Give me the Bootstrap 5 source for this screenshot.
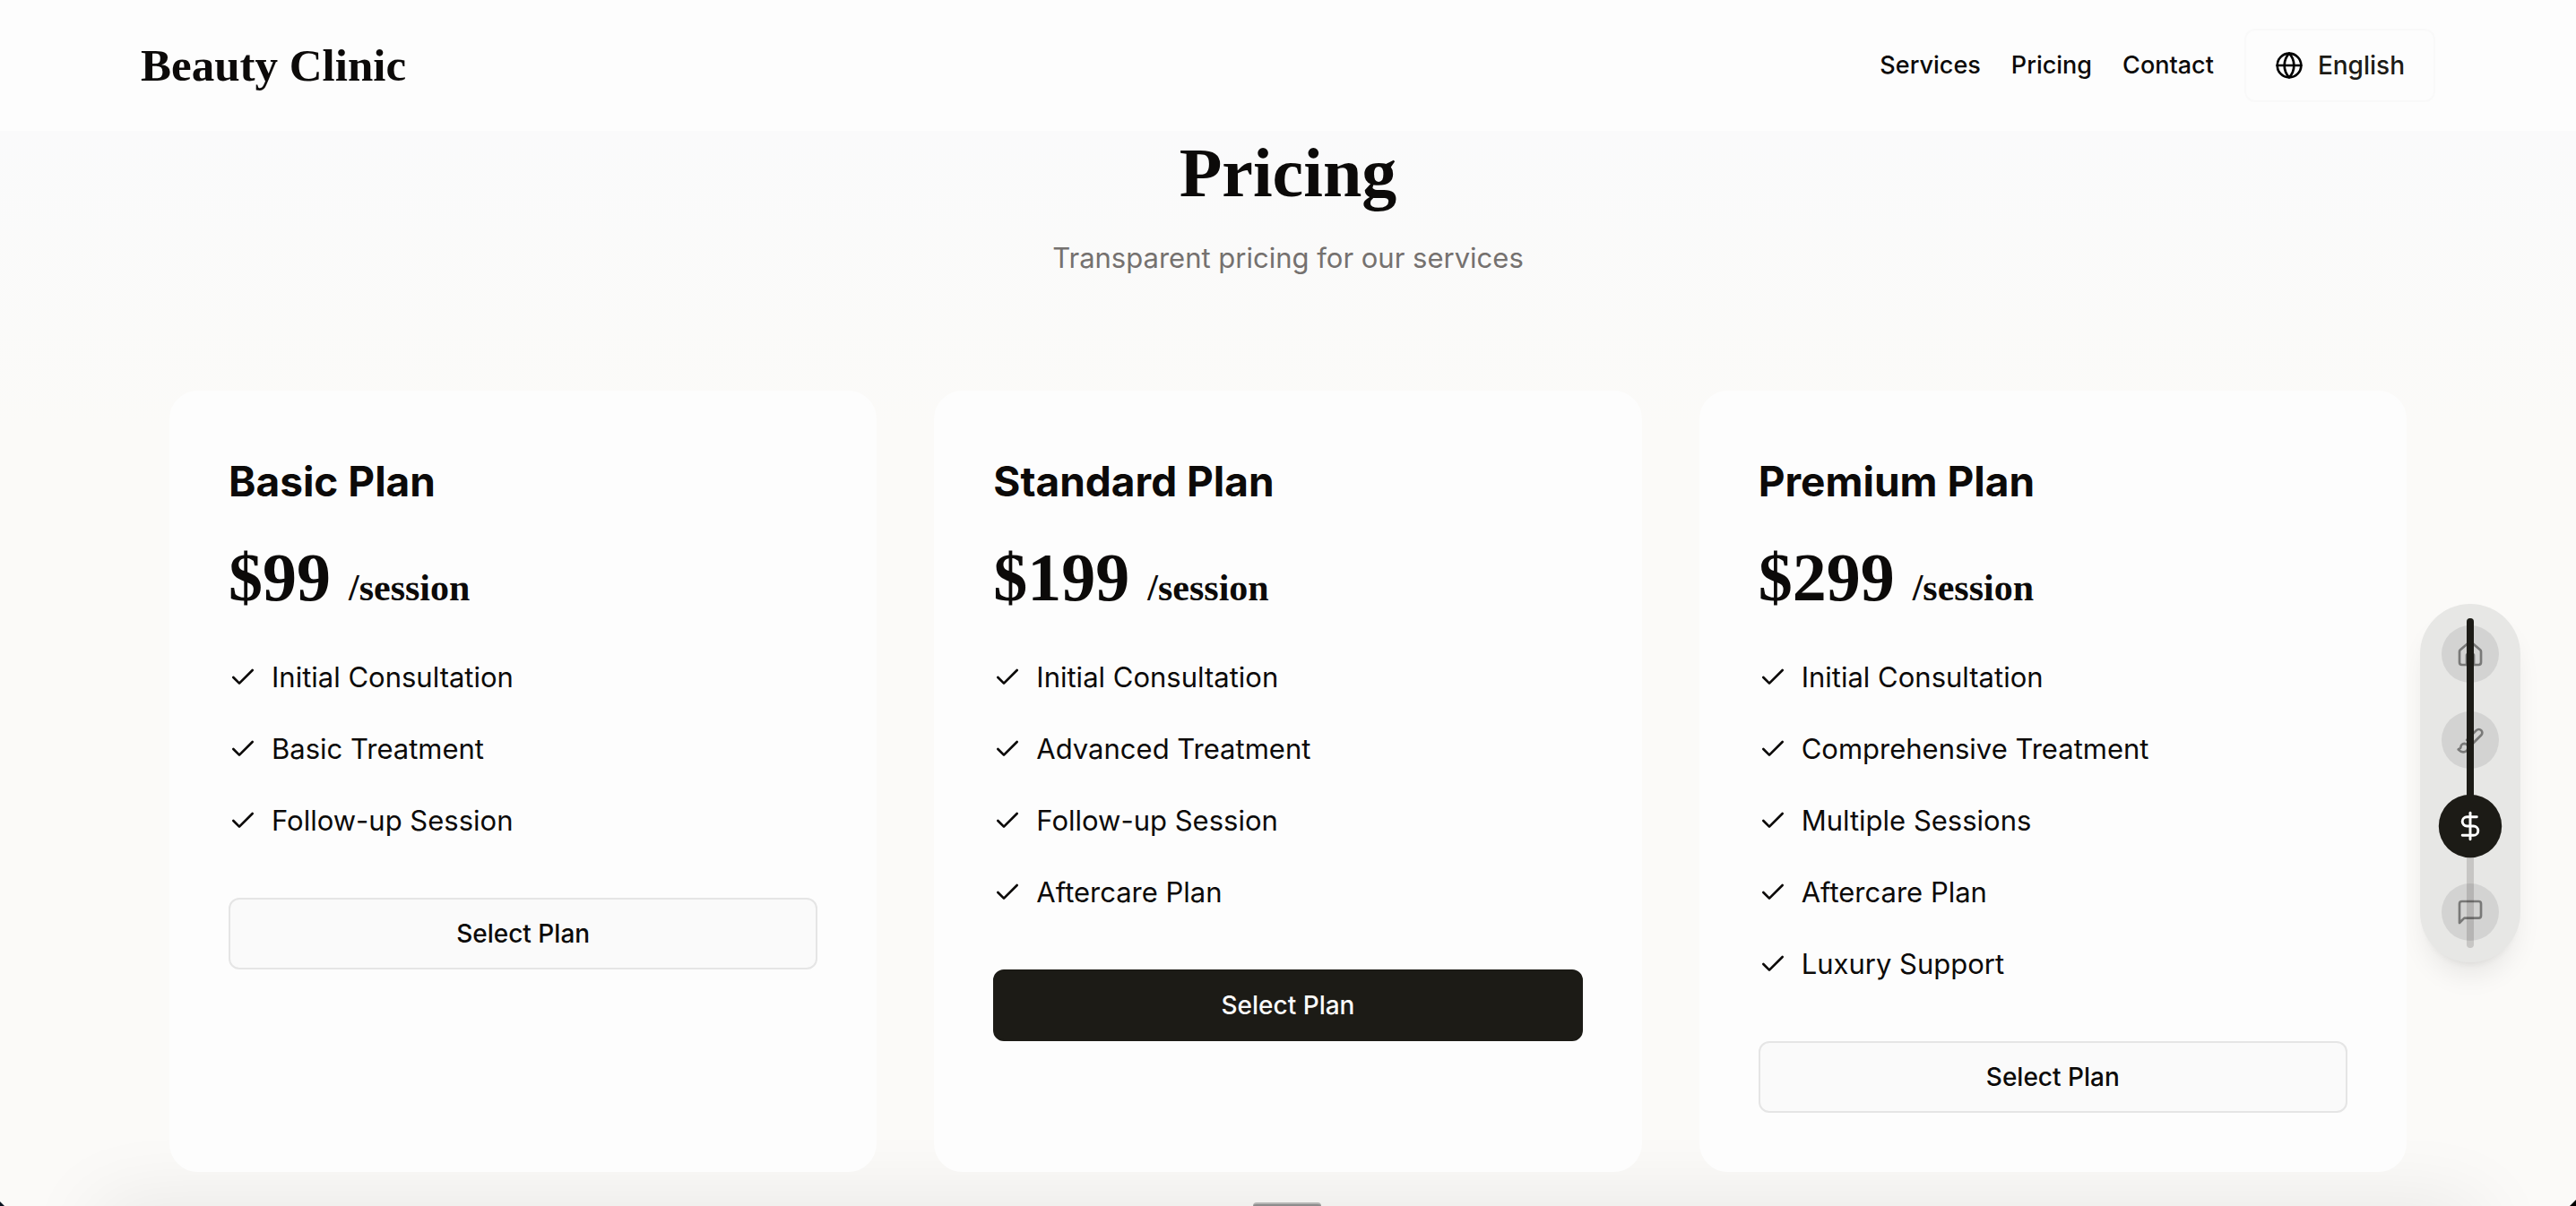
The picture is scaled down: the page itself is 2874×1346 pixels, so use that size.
<!DOCTYPE html>
<html lang="en">
<head>
<meta charset="utf-8">
<meta name="viewport" content="width=device-width, initial-scale=1">
<title>Beauty Clinic</title>
<link href="https://cdn.jsdelivr.net/npm/bootstrap@5.3.0/dist/css/bootstrap.min.css" rel="stylesheet">
<style>
  :root { --ink: #0c0a09; --brand: #1c1b16; }
  body { font-family: Inter, "Liberation Sans", sans-serif; color: var(--ink); font-size: 31px; line-height: 48px; background: #fafafa; }
  .display-face { font-family: "Liberation Serif", serif; font-weight: 700; }
  .page { position: relative; overflow: hidden; background: linear-gradient(#fafafb 146px, #fbfaf8 480px, #fbfaf8); }
  .shell { max-width: 2560px; width: 100%; margin: 0 auto; }
  .topbar { background: #fdfdfd; padding: 32px 0; }
  .brand-name { font-size: 51px; line-height: 64px; }
  .menu { font-size: 27px; font-weight: 500; gap: 34px; line-height: 40px; }
  .menu a { color: var(--ink); text-decoration: none; }
  .lang-btn { font-size: 28px; line-height: 40px; font-weight: 500; color: var(--brand); border: 2px solid #f9f9f9; border-radius: 12px; padding: 19px 32px; gap: 16px; }
  .lang-btn .icon { color: #000; }
  .icon { width: 32px; height: 32px; fill: none; stroke: currentColor; stroke-width: 2; stroke-linecap: round; stroke-linejoin: round; flex: none; display: block; }
  .pricing { padding: 8px 32px 36px; }
  .pricing-title { font-size: 78px; line-height: 78px; margin: 0 0 32px; }
  .pricing-sub { color: #75716f; margin: 0 0 124px; }
  .plans { --bs-gutter-x: 64px; --bs-gutter-y: 64px; position: relative; z-index: 1; }
  .plan { background: #fdfdfd; border: 2px solid #fdfdfd; border-radius: 32px; padding: 64px; }
  .plan-name { font-size: 46px; line-height: 70px; font-weight: 700; margin: 0 0 32px; }
  .plan-price { font-size: 76px; line-height: 80px; margin: 0 0 48px; gap: 20px; }
  .plan-price span { font-size: 42px; line-height: 48px; }
  .features { gap: 32px; margin: 0 0 62px; }
  .features li { gap: 16px; }
  .plan-btn { height: 80px; font-size: 28px; font-weight: 500; border: 2px solid #e5e5e5; border-radius: 12px; background: #fafafa; color: var(--ink); }
  .plan-btn.chosen { background: var(--brand); border-color: var(--brand); color: #fafafa; }
  .rail { position: fixed; top: 674px; right: 62px; z-index: 5; padding: 24px; gap: 32px; border-radius: 56px; background: #e7e7e5; box-shadow: 0 20px 30px -6px rgba(0,0,0,.08), 0 8px 12px -8px rgba(0,0,0,.1); }
  .rail a { width: 64px; height: 64px; border-radius: 50%; background: #d3d3d2; color: #797978; }
  .rail a.current { position: relative; z-index: 2; background: var(--brand); color: #fff; transform: scale(1.1); }
  .track, .track-fill { position: absolute; width: 8px; border-radius: 4px; left: 52px; top: 16px; z-index: 1; }
  .track { bottom: 16px; background: rgba(28,27,22,.16); }
  .track-fill { height: 232px; background: var(--brand); }
  .dock { position: absolute; top: 100%; left: 110px; right: 110px; height: 80px; box-shadow: 0 0 90px 0 rgba(0,0,0,.09); }
  .grip { position: absolute; bottom: 0; left: 50%; width: 76px; height: 4px; margin-left: -39px; background: #8c8c8c; border-top: 2px solid #b5b5b4; border-radius: 4px 4px 0 0; }
  .page::before, .page::after { content: ""; position: absolute; bottom: 0; width: 5px; height: 5px; background: #08131f; z-index: 3; }
  .page::before { left: 0; clip-path: polygon(0 0, 100% 100%, 0 100%); }
  .page::after { right: 0; width: 7px; height: 7px; background: #000; clip-path: polygon(100% 0, 100% 100%, 0 100%); }
</style>
</head>
<body>
<svg class="d-none" xmlns="http://www.w3.org/2000/svg">
  <symbol id="check" viewBox="0 0 24 24"><path d="M20 6 9 17l-5-5"/></symbol>
</svg>
<div class="page min-vh-100">
  <header class="topbar">
    <div class="shell d-flex align-items-center justify-content-between">
      <div class="brand-name display-face">Beauty Clinic</div>
      <nav class="menu d-flex align-items-center">
        <a href="#services">Services</a>
        <a href="#pricing">Pricing</a>
        <a href="#contact">Contact</a>
        <button type="button" class="lang-btn bg-transparent d-flex align-items-center">
          <svg class="icon" viewBox="0 0 24 24"><circle cx="12" cy="12" r="10"/><path d="M12 2a14.5 14.5 0 0 0 0 20 14.5 14.5 0 0 0 0-20"/><path d="M2 12h20"/></svg>
          English
        </button>
      </nav>
    </div>
  </header>

  <main class="shell pricing" id="pricing">
    <div class="text-center">
      <h2 class="pricing-title display-face">Pricing</h2>
      <p class="pricing-sub">Transparent pricing for our services</p>
    </div>
    <div class="row row-cols-1 row-cols-lg-3 plans mt-0">
      <div class="col mt-0">
        <article class="plan h-100">
          <h3 class="plan-name">Basic Plan</h3>
          <div class="plan-price display-face d-flex align-items-baseline">$99 <span>/session</span></div>
          <ul class="features list-unstyled d-flex flex-column">
            <li class="d-flex align-items-center"><svg class="icon"><use href="#check"/></svg>Initial Consultation</li>
            <li class="d-flex align-items-center"><svg class="icon"><use href="#check"/></svg>Basic Treatment</li>
            <li class="d-flex align-items-center"><svg class="icon"><use href="#check"/></svg>Follow-up Session</li>
          </ul>
          <button type="button" class="plan-btn w-100 d-block">Select Plan</button>
        </article>
      </div>
      <div class="col mt-0">
        <article class="plan h-100">
          <h3 class="plan-name">Standard Plan</h3>
          <div class="plan-price display-face d-flex align-items-baseline">$199 <span>/session</span></div>
          <ul class="features list-unstyled d-flex flex-column">
            <li class="d-flex align-items-center"><svg class="icon"><use href="#check"/></svg>Initial Consultation</li>
            <li class="d-flex align-items-center"><svg class="icon"><use href="#check"/></svg>Advanced Treatment</li>
            <li class="d-flex align-items-center"><svg class="icon"><use href="#check"/></svg>Follow-up Session</li>
            <li class="d-flex align-items-center"><svg class="icon"><use href="#check"/></svg>Aftercare Plan</li>
          </ul>
          <button type="button" class="plan-btn chosen w-100 d-block">Select Plan</button>
        </article>
      </div>
      <div class="col mt-0">
        <article class="plan h-100">
          <h3 class="plan-name">Premium Plan</h3>
          <div class="plan-price display-face d-flex align-items-baseline">$299 <span>/session</span></div>
          <ul class="features list-unstyled d-flex flex-column">
            <li class="d-flex align-items-center"><svg class="icon"><use href="#check"/></svg>Initial Consultation</li>
            <li class="d-flex align-items-center"><svg class="icon"><use href="#check"/></svg>Comprehensive Treatment</li>
            <li class="d-flex align-items-center"><svg class="icon"><use href="#check"/></svg>Multiple Sessions</li>
            <li class="d-flex align-items-center"><svg class="icon"><use href="#check"/></svg>Aftercare Plan</li>
            <li class="d-flex align-items-center"><svg class="icon"><use href="#check"/></svg>Luxury Support</li>
          </ul>
          <button type="button" class="plan-btn w-100 d-block">Select Plan</button>
        </article>
      </div>
    </div>
  </main>
  <div class="dock"></div>
  <div class="grip"></div>
</div>

<nav class="rail d-flex flex-column" aria-label="Sections">
  <a href="#home" aria-label="Home" class="d-flex align-items-center justify-content-center"><svg class="icon" viewBox="0 0 24 24"><path d="M15 21v-8a1 1 0 0 0-1-1h-4a1 1 0 0 0-1 1v8"/><path d="M3 10a2 2 0 0 1 .709-1.528l7-5.999a2 2 0 0 1 2.582 0l7 5.999A2 2 0 0 1 21 10v9a2 2 0 0 1-2 2H5a2 2 0 0 1-2-2z"/></svg></a>
  <a href="#services" aria-label="Services" class="d-flex align-items-center justify-content-center"><svg class="icon" viewBox="0 0 24 24"><path d="m9.06 11.9 8.07-8.06a2.85 2.85 0 1 1 4.03 4.03l-8.06 8.08"/><path d="M7.07 14.94c-1.66 0-3 1.35-3 3.02 0 1.33-2.5 1.52-2 2.02 1.08 1.1 2.49 2.02 4 2.02 2.2 0 4-1.8 4-4.04a3.01 3.01 0 0 0-3-3.02z"/></svg></a>
  <a href="#pricing" aria-label="Pricing" class="current d-flex align-items-center justify-content-center"><svg class="icon" viewBox="0 0 24 24"><path d="M12 2v20"/><path d="M17 5H9.5a3.5 3.5 0 0 0 0 7h5a3.5 3.5 0 0 1 0 7H6"/></svg></a>
  <a href="#contact" aria-label="Contact" class="d-flex align-items-center justify-content-center"><svg class="icon" viewBox="0 0 24 24"><path d="M21 15a2 2 0 0 1-2 2H7l-4 4V5a2 2 0 0 1 2-2h14a2 2 0 0 1 2 2z"/></svg></a>
  <span class="track"></span>
  <span class="track-fill"></span>
</nav>
<script src="https://cdn.jsdelivr.net/npm/bootstrap@5.3.0/dist/js/bootstrap.bundle.min.js"></script>
</body>
</html>
